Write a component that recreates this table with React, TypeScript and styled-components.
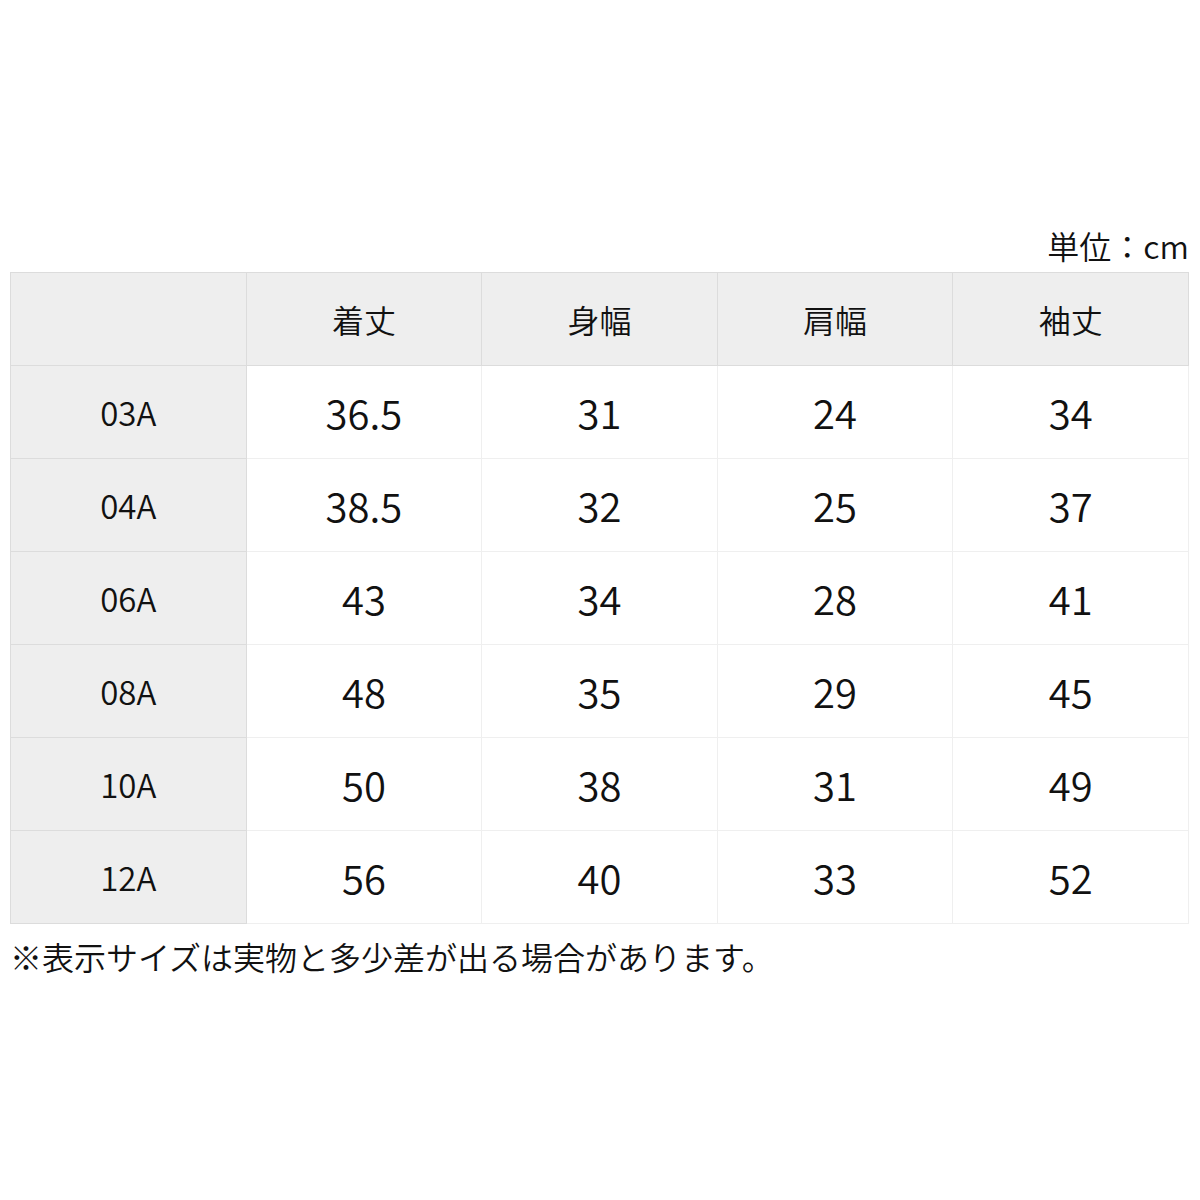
import React from 'react';
import styled, { createGlobalStyle } from 'styled-components';

const GlobalStyle = createGlobalStyle`
  body {
    margin: 0;
    background: #fff;
    font-family: "Noto Sans CJK JP", "Noto Sans", sans-serif;
    font-weight: 350;
    color: #111;
  }
`;

const Page = styled.div`
  width: 1200px;
  height: 1200px;
  padding: 224px 11px 0 10px;
  box-sizing: border-box;
`;

const Unit = styled.div`
  text-align: right;
  font-size: 32px;
  line-height: 42px;
  margin-bottom: 6px;
`;

const Table = styled.table`
  width: 100%;
  border-collapse: collapse;
  table-layout: fixed;
  border: 1px solid #dcdcdc;
`;

const HeadCell = styled.th`
  height: 92px;
  background: #eeeeee;
  border: 1px solid #dcdcdc;
  font-weight: 350;
  font-size: 32px;
  text-align: center;
  padding: 0;
`;

const SizeCell = styled.th`
  height: 92px;
  background: #eeeeee;
  border: 1px solid #dcdcdc;
  font-weight: 350;
  font-size: 33px;
  text-align: center;
  padding: 0;
`;

const ValueCell = styled.td`
  height: 92px;
  border: 1px solid #efefef;
  font-size: 40px;
  text-align: center;
  padding: 0;
`;

const Note = styled.p`
  margin: 12px 0 0 0;
  font-size: 32px;
  line-height: 40px;
`;

const headers = ['着丈', '身幅', '肩幅', '袖丈'];

const rows: [string, string[]][] = [
  ['03A', ['36.5', '31', '24', '34']],
  ['04A', ['38.5', '32', '25', '37']],
  ['06A', ['43', '34', '28', '41']],
  ['08A', ['48', '35', '29', '45']],
  ['10A', ['50', '38', '31', '49']],
  ['12A', ['56', '40', '33', '52']],
];

const App: React.FC = () => {
  return (
    <Page>
      <GlobalStyle />
      <Unit>単位：cm</Unit>
      <Table>
        <thead>
          <tr>
            <HeadCell />
            {headers.map((h) => (
              <HeadCell key={h}>{h}</HeadCell>
            ))}
          </tr>
        </thead>
        <tbody>
          {rows.map(([size, vals]) => (
            <tr key={size}>
              <SizeCell>{size}</SizeCell>
              {vals.map((v, i) => (
                <ValueCell key={i}>{v}</ValueCell>
              ))}
            </tr>
          ))}
        </tbody>
      </Table>
      <Note>※表示サイズは実物と多少差が出る場合があります。</Note>
    </Page>
  );
};

export default App;
